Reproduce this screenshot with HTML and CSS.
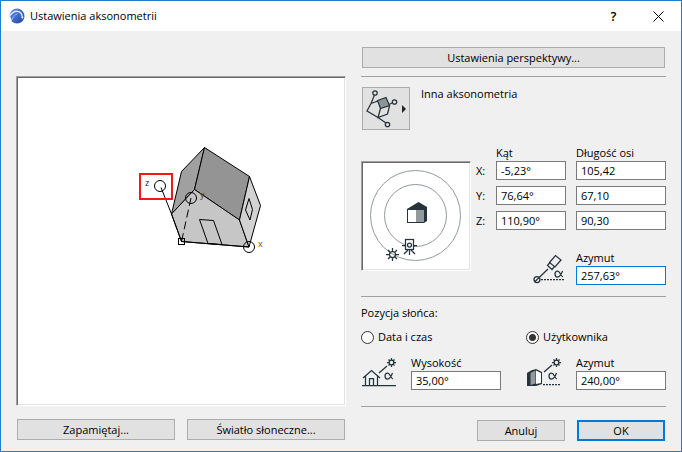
FILE: index.html
```html
<!DOCTYPE html>
<html lang="pl">
  <head>
    <meta charset="UTF-8" />
    <meta name="viewport" content="width=device-width, initial-scale=1.0" />
    <title>Ustawienia aksonometrii</title>
    <link rel="stylesheet" href="styles.css">
  </head>
  <body>
    <div class="dialog">
      <header class="titlebar">
        <svg class="logo" viewBox="0 0 16 16">
          <defs>
            <linearGradient id="logo-blue" x1="0" y1="0" x2="1" y2="1">
              <stop offset="0" stop-color="#5f92ee" />
              <stop offset="1" stop-color="#22439c" />
            </linearGradient>
          </defs>
          <circle cx="8" cy="8" r="7.500" fill="url(#logo-blue)" />
          <path d="M0 9.500C2 5.500 5 3 8.500 3.300c3.200.3 4.500 3 4.800 5.500" fill="none" stroke="#e6edfc" stroke-width="1.300" />
          <path d="M2 14C3.500 9.500 5.500 7 8.500 5.800" fill="none" stroke="#b9ccf5" stroke-width=".8" />
          <path d="M0 10l1.500-1L3 14z" fill="#fff" />
          <circle cx="13.400" cy="9.500" r="1" fill="#fff" />
        </svg>
        <h1>Ustawienia aksonometrii</h1>
        <button class="title-btn" aria-label="Pomoc">?</button>
        <button class="title-btn close" aria-label="Zamknij">
          <svg viewBox="0 0 11 11"><path d="M.5 .5l10 10M10.500 .5l-10 10" /></svg>
        </button>
      </header>

      <main class="content">
        <section class="left">
          <svg class="preview" viewBox="18 78 326 326">
            <g class="house">
              <polygon points="204.500,147.500 181.500,171.500 171.500,214 194.500,189.500" fill="#a0a0a0" />
              <polygon points="204.500,147.500 249.500,176.500 239.500,220 194.500,189.500" fill="#949494" />
              <polygon points="171.500,214 194.500,189.500 239.500,220 249,247 181.500,241.500" fill="#c6c6c6" />
              <polygon points="249.500,176.500 260.500,205.500 249,247 239.500,220" fill="#d2d2d2" />
              <polygon points="199.500,219.500 213.500,220.500 222,244.500 208,243.500" fill="none" />
              <polygon points="249,198.500 252.500,209.500 250,220 245.500,210" fill="none" />
            </g>
            <g class="axes">
              <path d="M161 187.500L171.500 214L181.500 241.500L249 247" />
              <path d="M191 198L181.500 241.500" stroke-dasharray="8 4" />
              <circle cx="160" cy="186" r="5.500" />
              <circle cx="191" cy="198" r="5.500" />
              <circle cx="249" cy="247" r="5.500" />
              <rect x="178.500" y="238.500" width="6" height="6" />
            </g>
            <rect class="mark" x="140" y="174" width="32" height="25" />
            <text x="145" y="186" fill="#101c38">z</text>
            <text x="200" y="198" fill="#4a3a20">y</text>
            <text x="258" y="247" fill="#905000">x</text>
          </svg>
          <div class="buttons">
            <button class="btn">Zapamiętaj...</button>
            <button class="btn">Światło słoneczne...</button>
          </div>
        </section>

        <section class="right">
          <button class="btn perspective">Ustawienia perspektywy...</button>
          <hr>
          <div class="type-row">
            <button class="type-btn" aria-label="Typ aksonometrii">
              <svg viewBox="0 0 46 41">
                <g class="line">
                  <path d="M11.500 7L8 15.500L4 23L15 29.500L23 35M8 15.500L15 13M26 16.500L29 15M17.500 20.500L15 29.500L24.500 26L26.500 18" />
                  <path d="M14.500 12.500L23 9.500L26.500 17.500L17.500 20.500Z" fill="#8d9599" />
                  <circle cx="12" cy="5" r="2.200" />
                  <circle cx="31.500" cy="14" r="2.200" />
                  <circle cx="24.500" cy="36.500" r="2.200" />
                </g>
                <path d="M39 17v8l4-4z" fill="#222" />
              </svg>
            </button>
            <p>Inna aksonometria</p>
          </div>

          <div class="angles">
            <svg class="compass" viewBox="363 163 106 106">
              <circle class="ring" cx="415.500" cy="215.500" r="45" />
              <circle class="ring" cx="415.500" cy="215.500" r="31" />
              <path d="M407 209L418.500 202L427 207V221L424 223H407Z" fill="#25333b" />
              <path d="M408 210h8v12h-8z" fill="#fff" />
              <path d="M416 210h8v12h-8z" fill="#929a9e" />
              <g class="line">
                <circle cx="392.500" cy="254.500" r="3" />
                <path d="M392.500 248v3M392.500 258v3M386 254.500h3M396 254.500h3M388 250l2 2M395 257l2 2M397 250l-2 2M390 257l-2 2" />
                <rect x="405.500" y="239.500" width="8" height="10" fill="#fff" />
                <circle cx="409.500" cy="245" r="2" />
                <path d="M402 245.500h3M414 245.500h3M409.500 250v5M408 250l-4 4M411 250l4 4" />
              </g>
            </svg>
            <div class="axis-grid">
              <span></span>
              <span>Kąt</span>
              <span>Długość osi</span>
              <label for="x-angle">X:</label>
              <input id="x-angle" type="text" value="-5,23°">
              <input type="text" value="105,42" aria-label="Długość osi X">
              <label for="y-angle">Y:</label>
              <input id="y-angle" type="text" value="76,64°">
              <input type="text" value="67,10" aria-label="Długość osi Y">
              <label for="z-angle">Z:</label>
              <input id="z-angle" type="text" value="110,90°">
              <input type="text" value="90,30" aria-label="Długość osi Z">
            </div>
            <div class="field camera">
              <svg class="icon" viewBox="0 0 36 32">
                <g class="line">
                  <circle cx="5" cy="26.500" r="3" />
                  <path d="M3 28.500L16 16" />
                  <path d="M18 9.500L15.500 12.500L20 16.500L22.500 13.500" />
                  <path d="M17.500 9.500L23.500 2.500L29 7L23 14Z" />
                  <path d="M9 26.500h23" stroke-dasharray="2 1" />
                  <path class="alpha" d="M30.500 18c-1.500 4-3 6-5 6s-2.500-1.500-2.500-3 1-3 2.700-3c2.300 0 2.800 5.500 5.300 6" />
                </g>
              </svg>
              <label for="camera-azimuth">Azymut</label>
              <input id="camera-azimuth" class="focused" type="text" value="257,63°">
            </div>
          </div>
          <hr>

          <h2>Pozycja słońca:</h2>
          <div class="radios">
            <label><input type="radio" name="sun">Data i czas</label>
            <label><input type="radio" name="sun" checked>Użytkownika</label>
          </div>
          <div class="sun-fields">
            <div class="field">
              <svg class="icon" viewBox="0 0 36 32">
                <g class="line">
                  <path d="M2 20L10.500 12.500L19 20M4.500 18v9.500M16.500 18v9.500M8.500 27.500v-7h4v7M1 27.500h34M18 15L26 8" />
                  <circle cx="30.500" cy="4.500" r="2.300" />
                  <path d="M30.500 0v2M30.500 7v2M26 4.500h2M33 4.500h2M27.500 1.500l1.500 1.500M32 6l1.500 1.500M33.500 1.500L32 3M29 6l-1.500 1.500" />
                  <path class="alpha" d="M31.500 15c-1.500 4-3 6-5 6s-2.500-1.500-2.500-3 1-3 2.700-3c2.300 0 2.800 5.500 5.300 6" />
                </g>
              </svg>
              <label for="sun-height">Wysokość</label>
              <input id="sun-height" type="text" value="35,00°">
            </div>
            <div class="field">
              <svg class="icon" viewBox="0 0 36 32">
                <path d="M1 15L5 12.500L10 11L16 14V26L10 28L1 28Z" fill="#25333b" />
                <path d="M4.500 15L9.500 12.500V25.500L4.500 27Z" fill="#929a9e" />
                <path d="M10 12.500L15 15V25L10 26Z" fill="#fff" />
                <g class="line">
                  <path d="M18 14L26 7" />
                  <path d="M17 26.500h18" stroke-dasharray="2 1" />
                  <circle cx="30.500" cy="4.500" r="2.300" />
                  <path d="M30.500 0v2M30.500 7v2M26 4.500h2M33 4.500h2M27.500 1.500l1.500 1.500M32 6l1.500 1.500M33.500 1.500L32 3M29 6l-1.500 1.500" />
                  <path class="alpha" d="M30.500 15c-1.500 4-3 6-5 6s-2.500-1.500-2.500-3 1-3 2.700-3c2.300 0 2.800 5.500 5.300 6" />
                </g>
              </svg>
              <label for="sun-azimuth">Azymut</label>
              <input id="sun-azimuth" type="text" value="240,00°">
            </div>
          </div>
          <hr>
          <div class="actions">
            <button class="btn">Anuluj</button>
            <button class="btn default">OK</button>
          </div>
        </section>
      </main>
    </div>
  </body>
</html>
```

FILE: styles.css
```css
* {
  margin: 0;
  padding: 0;
  box-sizing: border-box;
}
body {
  font-family: "Open Sans", "Noto Sans", sans-serif;
  font-size: 11px;
  line-height: 16px;
  color: #000;
}
svg {
  display: block;
}
button,
input {
  font: inherit;
  color: inherit;
}
.dialog {
  min-height: 100vh;
  border: 1px solid #1a80d4;
  background: #f0f0f0;
}

/* title bar */
.titlebar {
  display: flex;
  align-items: center;
  height: 30px;
  padding-left: 8px;
  background: #fff;
}
.logo {
  width: 16px;
  height: 16px;
}
.titlebar h1 {
  flex: 1;
  margin-left: 5px;
  font-size: 11px;
  font-weight: normal;
}
.title-btn {
  display: flex;
  align-items: center;
  justify-content: center;
  width: 45px;
  height: 30px;
  border: none;
  background: none;
  font-size: 13px;
  font-weight: 600;
}
.close svg {
  width: 11px;
  height: 11px;
  stroke: #000;
}

.content {
  display: grid;
  grid-template-columns: 330fr 305fr;
  column-gap: 15px;
  padding: 0 15px 10px;
}
.btn {
  height: 21px;
  border: 1px solid #adadad;
  background: #e1e1e1;
  line-height: 19px;
}
.btn.default {
  border: 2px solid #0078d7;
  line-height: 17px;
}

/* left side */
.left {
  padding-top: 45px;
}
.preview,
.compass {
  width: 100%;
  padding: 1px;
  border: 1px solid;
  border-color: #a0a0a0 #fff #fff #a0a0a0;
  background: #fff;
  box-shadow: inset 1px 1px #696969, inset -1px -1px #e3e3e3;
}
.buttons {
  display: grid;
  grid-template-columns: 1fr 1fr;
  gap: 12px;
  padding: 13px 1px 0;
}
.house {
  stroke: #000;
  stroke-linejoin: round;
}
.axes {
  fill: none;
  stroke: #000;
}
.mark {
  fill: none;
  stroke: #f01818;
  stroke-width: 2;
}
.preview text {
  font-size: 9px;
}

/* right side */
.right {
  display: flex;
  flex-direction: column;
  padding-top: 16px;
}
hr {
  border: none;
  border-top: 1px solid #a0a0a0;
}
.perspective {
  margin: 0 1px 8px;
}
.line {
  fill: none;
  stroke: #25333b;
  stroke-width: 1.25;
}
.type-row {
  display: flex;
  gap: 11px;
  margin: 10px 1px 0;
}
.type-btn {
  width: 48px;
  height: 43px;
  border: 1px solid #adadad;
  background: #e1e1e1;
}
.type-row p {
  margin-top: -1px;
}
.angles {
  display: grid;
  grid-template-columns: 110px 1fr;
  column-gap: 5px;
  align-items: start;
  margin: 15px 0 11px;
}
.compass {
  margin-top: 16px;
}
.ring {
  fill: none;
  stroke: #929a9e;
}
.axis-grid {
  display: grid;
  grid-template-columns: 10px 7fr 9fr;
  column-gap: 10px;
  row-gap: 6px;
  align-items: center;
}
.axis-grid span {
  height: 10px;
}
.axis-grid label {
  white-space: nowrap;
}
input[type="text"] {
  width: 100%;
  height: 19px;
  padding: 0 4px;
  border: 1px solid #7a7a7a;
  background: #fff;
  outline: none;
}
input[type="text"].focused {
  border-color: #0078d7;
}
.field {
  display: grid;
  grid-template-columns: 36px 90px;
  column-gap: 14px;
}
.field .icon {
  grid-row: 1 / 3;
  align-self: end;
  width: 36px;
  height: 32px;
}
.camera {
  grid-column: 1 / 3;
  justify-content: end;
  column-gap: 8px;
  margin-top: -21px;
}
h2 {
  margin-top: 8px;
  font-size: 11px;
  font-weight: normal;
}
.radios {
  display: grid;
  grid-template-columns: 165px 1fr;
  margin-top: 8px;
}
.radios label {
  display: flex;
  align-items: center;
  gap: 4px;
}
.radios input {
  width: 13px;
  height: 13px;
  appearance: none;
  border: 1px solid #333;
  border-radius: 50%;
  background: #fff;
}
.radios input:checked {
  background: radial-gradient(#333 0 3px, #fff 4px);
}
.sun-fields {
  display: flex;
  justify-content: space-between;
  margin: 10px 0 16px;
}
.actions {
  display: grid;
  grid-template-columns: 88px 88px;
  justify-content: end;
  gap: 12px;
  padding: 13px 1px 0;
}
```
